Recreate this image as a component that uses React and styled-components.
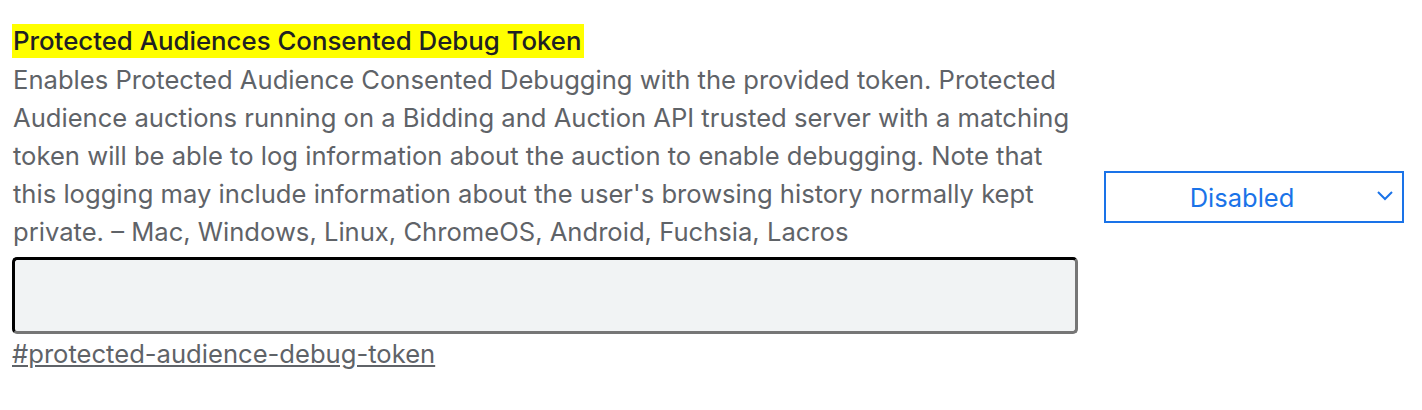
import React from 'react'
import styled, {createGlobalStyle} from 'styled-components'

const GlobalStyle = createGlobalStyle`
  body {
    margin: 0;
    background: #fff;
    font-family: Inter, "Noto Sans", sans-serif;
  }
`

const Page = styled.div`
  padding: 24px 18px 0 12px;
`

const Experiment = styled.div`
  display: flex;
  align-items: center;
  gap: 26px;
`

const Description = styled.div`
  width: 1066px;
  display: flex;
  flex-direction: column;
`

const Title = styled.h2`
  margin: 0;
  align-self: flex-start;
  background: #ffff00;
  color: #202124;
  font-size: 25.8px;
  font-weight: 500;
  line-height: 34px;
  padding: 0 2px 0 1px;
`

const Body = styled.p`
  width: 1075px;
  margin: 3px 0 0 1px;
  color: #5f6368;
  font-size: 25.6px;
  line-height: 38px;
`

const TokenInput = styled.textarea`
  box-sizing: border-box;
  width: 1066px;
  height: 77px;
  margin-top: 6px;
  background: #f1f3f4;
  border: 3px inset #767676;
  border-top-color: #1c1c1c;
  border-left-color: #1c1c1c;
  border-radius: 5px;
  resize: none;
`

const Permalink = styled.a`
  align-self: flex-start;
  margin-top: 4px;
  color: #5f6368;
  font-size: 25.6px;
  line-height: 32px;
  text-decoration: underline;
`

const Select = styled.div`
  box-sizing: border-box;
  width: 300px;
  height: 52px;
  border: 2px solid #1a73e8;
  display: flex;
  align-items: center;
  position: relative;
  color: #1a73e8;
  font-size: 25.5px;
`

const SelectLabel = styled.span`
  flex: 1;
  text-align: center;
  padding-right: 24px;
`

const Chevron = styled.svg`
  position: absolute;
  right: 8px;
  top: 17px;
`

export default function App() {
  return (
    <Page>
      <GlobalStyle />
      <Experiment>
        <Description>
          <Title>Protected Audiences Consented Debug Token</Title>
          <Body>
            Enables Protected Audience Consented Debugging with the provided
            token. Protected Audience auctions running on a Bidding and Auction
            API trusted server with a matching token will be able to log
            information about the auction to enable debugging. Note that this
            logging may include information about the user's browsing history
            normally kept private. – Mac, Windows, Linux, ChromeOS, Android,
            Fuchsia, Lacros
          </Body>
          <TokenInput />
          <Permalink href="#protected-audience-debug-token">
            #protected-audience-debug-token
          </Permalink>
        </Description>
        <Select>
          <SelectLabel>Disabled</SelectLabel>
          <Chevron width="18" height="12" viewBox="0 0 18 12">
            <path d="M2 2 L9 9 L16 2" fill="none" stroke="#1a73e8" strokeWidth="2" />
          </Chevron>
        </Select>
      </Experiment>
    </Page>
  )
}
